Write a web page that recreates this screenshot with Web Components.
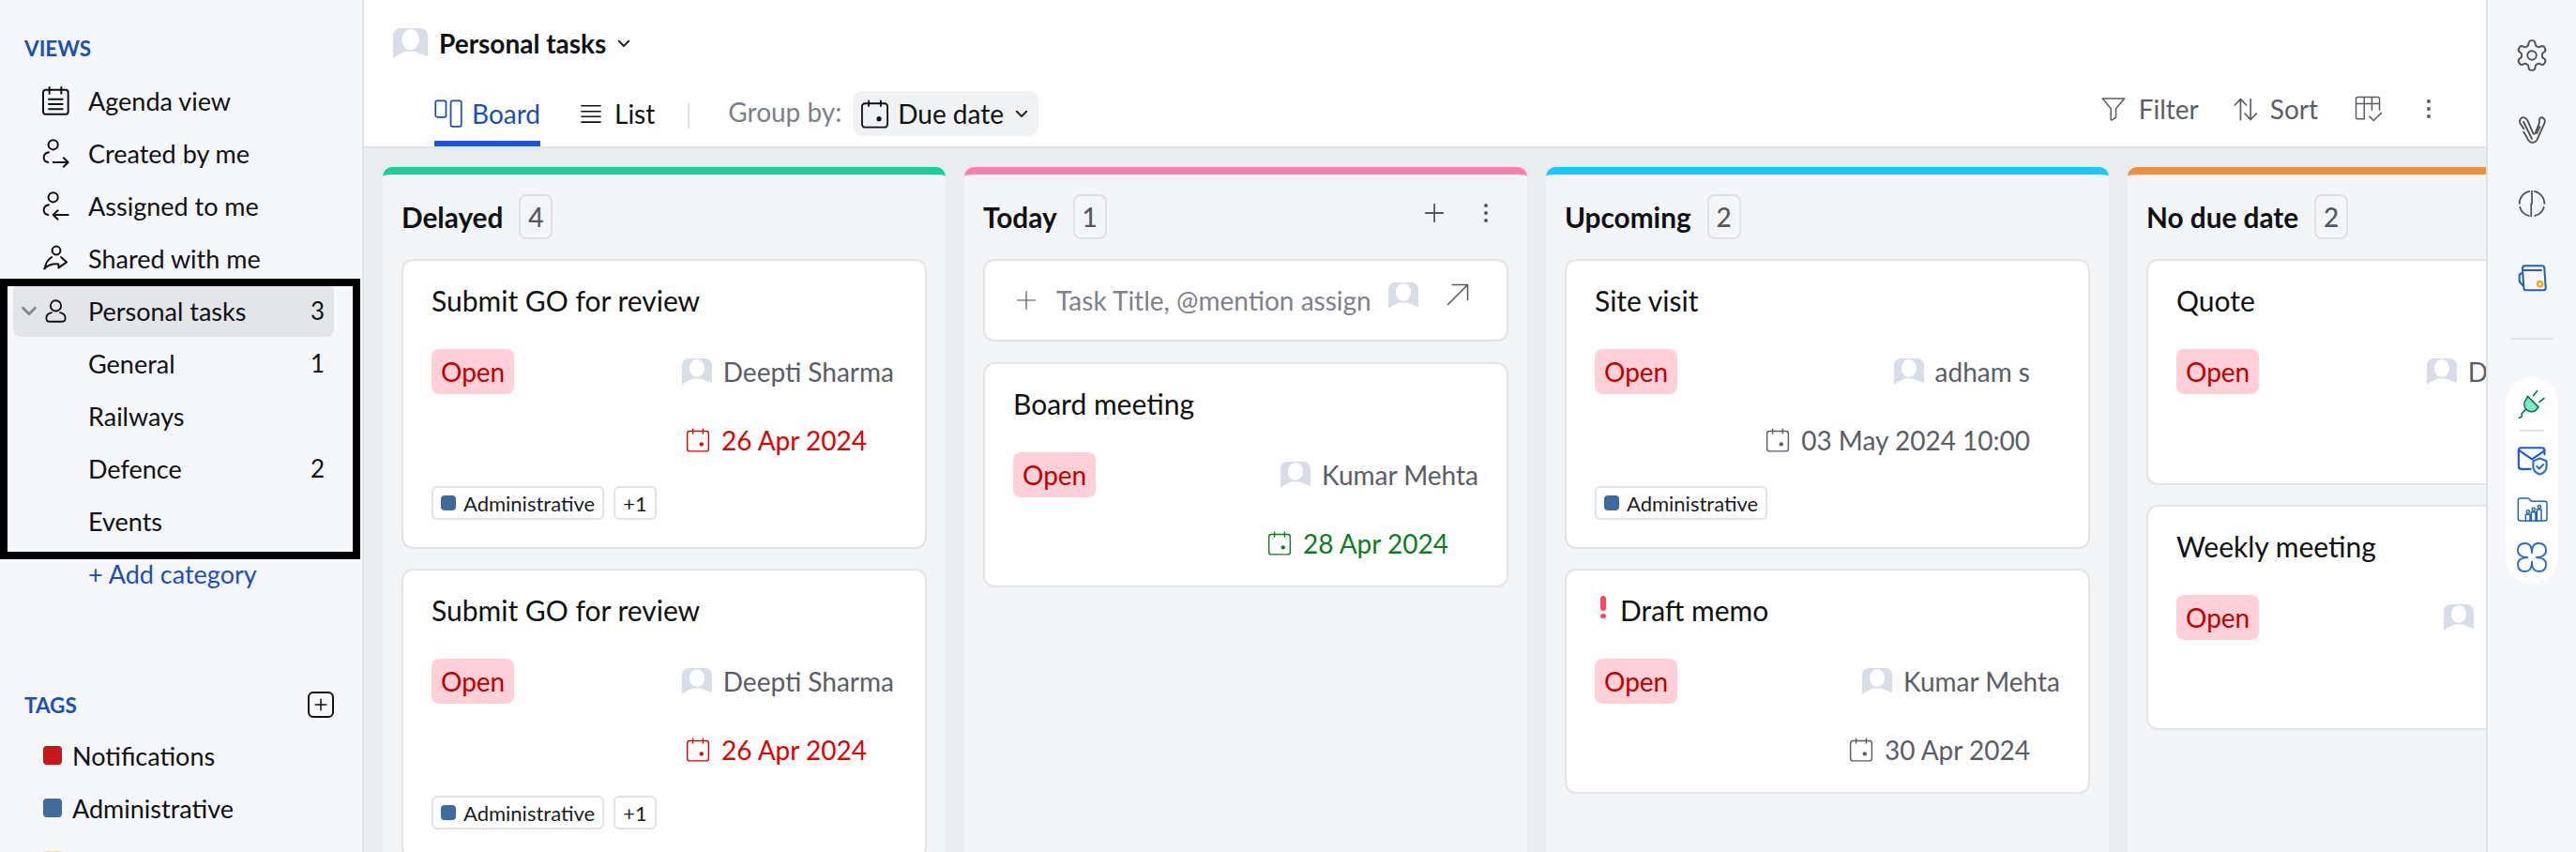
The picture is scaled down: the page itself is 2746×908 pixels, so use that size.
<!DOCTYPE html>
<html>
<head>
<meta charset="utf-8">
<title>Personal tasks</title>
<style>
  html, body { margin: 0; height: 100%; overflow: hidden; }
  body { font-family: "Lato", "Noto Sans", sans-serif; color: #0f1012; background: #fff; }
</style>
</head>
<body>
<task-app>
  <side-bar slot="left">
    <section-title>VIEWS</section-title>
    <nav-item icon="agenda">Agenda view</nav-item>
    <nav-item icon="created">Created by me</nav-item>
    <nav-item icon="assigned">Assigned to me</nav-item>
    <nav-item icon="shared">Shared with me</nav-item>
    <nav-item icon="person" active count="3">Personal tasks</nav-item>
    <nav-item count="1">General</nav-item>
    <nav-item>Railways</nav-item>
    <nav-item count="2">Defence</nav-item>
    <nav-item>Events</nav-item>
    <nav-item link>+ Add category</nav-item>
    <section-title add spaced>TAGS</section-title>
    <tag-row color="#c8161d">Notifications</tag-row>
    <tag-row color="#406a9b">Administrative</tag-row>
    <tag-row color="#f0dc6a"></tag-row>
  </side-bar>

  <view-header slot="top"></view-header>

  <board-column slot="board" label="Delayed" count="4" color="#17cf9d">
    <task-card label="Submit GO for review" assignee="Deepti Sharma" pad="3" date="26 Apr 2024" tone="#e00000">
      <tag-chip color="#406a9b">Administrative</tag-chip><tag-chip>+1</tag-chip>
    </task-card>
    <task-card label="Submit GO for review" assignee="Deepti Sharma" pad="3" date="26 Apr 2024" tone="#e00000">
      <tag-chip color="#406a9b">Administrative</tag-chip><tag-chip>+1</tag-chip>
    </task-card>
  </board-column>

  <board-column slot="board" label="Today" count="1" color="#ff7eae" actions>
    <quick-add></quick-add>
    <task-card label="Board meeting" assignee="Kumar Mehta" date="28 Apr 2024" tone="#0b7d1e"></task-card>
  </board-column>

  <board-column slot="board" label="Upcoming" count="2" color="#17c9ff">
    <task-card label="Site visit" assignee="adham s" pad="32" date="03 May 2024 10:00">
      <tag-chip color="#406a9b">Administrative</tag-chip>
    </task-card>
    <task-card label="Draft memo" priority assignee="Kumar Mehta" date="30 Apr 2024"></task-card>
  </board-column>

  <board-column slot="board" label="No due date" count="2" color="#ec8e3f">
    <task-card style="min-height:241px" label="Quote" assignee="Deepti Sharma" pad="3"></task-card>
    <task-card label="Weekly meeting" assignee="Kumar Mehta"></task-card>
  </board-column>

  <side-rail slot="right"></side-rail>
  <focus-frame slot="over"></focus-frame>
</task-app>

<script>
  // icon paths, all in a 24 box
  const ICONS = {
    agenda: `<path d="M8 1.5v5M17.5 1.5v5M8 3.5h9.500M8 3.5H5a2 2 0 0 0-2 2V21a2 2 0 0 0 2 2h16a2 2 0 0 0 2-2V5.5a2 2 0 0 0-2-2h-3.500M7.500 11h11M7.500 15h11M7.500 19h11"/>`,
    calendar: `<path d="M7 1v4.500M17 1v4.500M7 3.300h10M7 3.300H4a2.500 2.500 0 0 0-2.500 2.500v14.700A2.500 2.500 0 0 0 4 23h16a2.500 2.500 0 0 0 2.500-2.500V5.800A2.500 2.500 0 0 0 20 3.300h-3"/><circle cx="15.500" cy="16" r="2" fill="currentColor" stroke="none"/>`,
    created: `<circle cx="11" cy="5.500" r="3.800"/><path d="M7.500 11.500c-2.500.5-4 2.300-4 4.200 0 1.900 1.300 3.300 3.500 3.800M11 19.500h12M19.300 16l3.700 3.500-3.700 3.500"/>`,
    assigned: `<circle cx="11" cy="5.500" r="3.800"/><path d="M7.500 11.500c-2.500.5-4 2.300-4 4.200 0 1.900 1.300 3.300 3.500 3.800M11 19.500h12M14.700 16L11 19.500l3.700 3.500"/>`,
    shared: `<circle cx="13.500" cy="6" r="3.300"/><path d="M4.300 20.500c.5-4 2.500-7.500 5.500-9.200M17.300 11.300l4.500 4-6.500 4.500v-3c-4.500-.3-8.500.8-11.500 3.700"/>`,
    person: `<circle cx="12" cy="7" r="5"/><path d="M8 13.500c-3 .6-5 2.800-5 5.300 0 2 1.500 3.200 3.500 3.200h11c2 0 3.500-1.200 3.500-3.200 0-2.500-2-4.700-5-5.300"/>`,
    chevron: `<path d="M5 9l7 7 7-7"/>`,
    plus: `<path d="M12 2v20M2 12h20"/>`,
    dots: `<circle cx="12" cy="4" r="2" fill="currentColor" stroke="none"/><circle cx="12" cy="12" r="2" fill="currentColor" stroke="none"/><circle cx="12" cy="20" r="2" fill="currentColor" stroke="none"/>`,
    board: `<rect x="1" y="1" width="9" height="14" rx="1.500"/><rect x="14" y="1" width="9" height="22" rx="1.500"/>`,
    list: `<path d="M1 3h22M1 9.500h22M1 15.500h22M1 22h22"/>`,
    filter: `<path d="M2 2.500h20l-7.800 9.300V20l-3.700 2.200a.6.6 0 0 1-.9-.5V11.800z"/>`,
    sort: `<path d="M7.500 22V2.500M2 8l5.500-5.700L13 8M17 2.500V22M11.500 16l5.500 5.800 5.500-5.800"/>`,
    columns: `<path d="M9 20.500H3.500A1.500 1.500 0 0 1 2 19V3.500A1.500 1.500 0 0 1 3.500 2h17A1.500 1.500 0 0 1 22 3.500V13M2 7.500h20M9 2v18.500M15.500 2v11M13.500 18.500l3.500 3.500 6.500-6.500"/>`,
    arrow: `<path d="M3 21L21 3M7 3h14v14"/>`,
    gear: `<path d="M12.220 2h-.44a2 2 0 0 0-2 2v.18a2 2 0 0 1-1 1.730l-.43.25a2 2 0 0 1-2 0l-.15-.08a2 2 0 0 0-2.730.73l-.22.38a2 2 0 0 0 .73 2.730l.15.1a2 2 0 0 1 1 1.720v.51a2 2 0 0 1-1 1.740l-.15.09a2 2 0 0 0-.73 2.730l.22.38a2 2 0 0 0 2.730.73l.15-.08a2 2 0 0 1 2 0l.43.25a2 2 0 0 1 1 1.730V20a2 2 0 0 0 2 2h.44a2 2 0 0 0 2-2v-.18a2 2 0 0 1 1-1.730l.43-.25a2 2 0 0 1 2 0l.15.08a2 2 0 0 0 2.730-.73l.22-.39a2 2 0 0 0-.73-2.730l-.15-.08a2 2 0 0 1-1-1.740v-.5a2 2 0 0 1 1-1.740l.15-.09a2 2 0 0 0 .73-2.730l-.22-.38a2 2 0 0 0-2.730-.73l-.15.08a2 2 0 0 1-2 0l-.43-.25a2 2 0 0 1-1-1.730V4a2 2 0 0 0-2-2z"/><circle cx="12" cy="12" r="3"/>`,
    clip: `<path d="M5.500 11.500L2.600 7.200C1.300 4.800 3.400 1.800 6 2.500c1.300.3 2 1.200 2.600 2.500l4.200 9.800c.4 1 1.500 1 1.900 0l2-5 1.400-3.500C17 3.800 18.800 1.800 20.800 2.700c1.600.7 2 2.700 1.200 4.300l-6 13.300c-1.500 2.800-5.200 2.800-6.900.1L5.500 14"/><path d="M12 19.500L5.300 5.800M18.300 9.800L15.800 15"/>`,
    split: `<path d="M10 2.200A10 10 0 0 0 2 12M2.400 14.800A10 10 0 0 0 9.500 21.700M14 2.200A10 10 0 0 1 22 12M21.600 14.800A10 10 0 0 1 14.500 21.700M12 2v10M11.400 12v10"/>`
  };

  const COLOR_ICONS = {
    wallet: `<g fill="none" stroke="#1f62b0" stroke-width="1.500" stroke-linecap="round" stroke-linejoin="round"><path d="M4.500 6V4.500A2 2 0 0 1 6.500 2.500H20a2 2 0 0 1 2 2L23 20a2 2 0 0 1-2 2H7.500a2 2 0 0 1-2-2L4.500 6h15"/><path d="M4.500 8L2 9.500V15l3 3.500"/></g><circle cx="18.500" cy="17" r="2" fill="none" stroke="#f5a623" stroke-width="1.700"/>`,
    plug: `<g stroke="#0a6b52" stroke-width="1.100" stroke-linecap="round" stroke-linejoin="round"><path d="M8.800 6.500l8.200 8.200-2 2.300c-2.300 1.800-5.300 1.500-7.200-.5-1.900-2-2.100-5-.3-7.300z" fill="#7ce8c8"/><path d="M13 6.200L16 2.500M17.500 11l3.700-3M7.500 16.500l-3 2.800c-.8 1 .5 1.800-.3 2.700-.6.500-1.200.7-1.900.7" fill="none"/></g>`,
    mail: `<g fill="none" stroke-width="1.500" stroke-linecap="round" stroke-linejoin="round"><path d="M21.500 8V5a2 2 0 0 0-2-2H4a2 2 0 0 0-2 2v12a2 2 0 0 0 2 2h7" stroke="#1a56db"/><path d="M2.500 5l9.500 6.500 9-6" stroke="#1a56db"/><path d="M18 11l5 1.800v4.500c0 2.800-2.200 4.700-5 5.700-2.800-1-5-2.900-5-5.700v-4.500z" stroke="#2a6cc0"/><path d="M15.800 17l1.700 1.700 3-3" stroke="#2a6cc0"/></g>`,
    folder: `<g fill="none" stroke="#1f62b0" stroke-width="1.100" stroke-linecap="round" stroke-linejoin="round"><path d="M6 21H2.500A1.500 1.500 0 0 1 1 19.500V4.500A1.500 1.500 0 0 1 2.500 3H9l3 2.500h10.500A1.500 1.500 0 0 1 24 7v12.500a1.500 1.500 0 0 1-1.500 1.500H6"/><path d="M7 21v-5h3.500v5M11.500 21v-7h3.500v7M16 21v-9h3.500v9"/><circle cx="8.800" cy="13.800" r="1.200"/><circle cx="13.300" cy="11.800" r="1.200"/><circle cx="18" cy="9.800" r="1.200"/></g>`,
    clover: `<path d="M12 9C12 5 13 2.500 16.500 2.500 20 2.500 21.500 4.500 21.500 7.500 21.500 10 19 12 15 12 19 12 21.500 14 21.500 16.500 21.500 19.500 20 21.500 16.500 21.500 13 21.500 12 19 12 15 12 19 11 21.500 7.500 21.500 4 21.500 2.500 19.500 2.500 16.500 2.500 14 5 12 9 12 5 12 2.500 10 2.500 7.500 2.500 4.500 4 2.500 7.500 2.500 11 2.500 12 5 12 9Z" fill="none" stroke="#2a6cc0" stroke-width="1.200" stroke-linejoin="round"/>`
  };

  class UiIcon extends HTMLElement {
    connectedCallback() {
      const name = this.getAttribute("name");
      const size = this.getAttribute("size") || 24;
      const sw = this.getAttribute("stroke") || 1.5;
      const root = this.shadowRoot || this.attachShadow({ mode: "open" });
      const body = COLOR_ICONS[name]
        ? COLOR_ICONS[name]
        : `<g fill="none" stroke="currentColor" stroke-width="${sw}" stroke-linecap="round" stroke-linejoin="round">${ICONS[name] || ""}</g>`;
      root.innerHTML = `
        <style>
          :host { display: inline-flex; flex: none; }
          svg { display: block; overflow: visible; }
        </style>
        <svg width="${size}" height="${size}" viewBox="0 0 24 24">${body}</svg>`;
    }
  }
  customElements.define("ui-icon", UiIcon);

  class UserAvatar extends HTMLElement {
    connectedCallback() {
      const w = this.getAttribute("w") || 32;
      const root = this.shadowRoot || this.attachShadow({ mode: "open" });
      root.innerHTML = `
        <style>
          :host { display: inline-flex; flex: none; }
          svg { display: block; }
        </style>
        <svg width="${w}" height="${w * 0.875}" viewBox="0 0 32 28">
          <path d="M0 7a7 7 0 0 1 7-7h18a7 7 0 0 1 7 7v19l-5-1.500h-22L0 28z" fill="#d8dde8"/>
          <ellipse cx="16" cy="10.500" rx="8" ry="9.500" fill="#fff"/>
          <path d="M2 28c.5-3 5-4.500 10-6.500h8c5 2 9.500 3.500 10 5.500v1z" fill="#fff"/>
        </svg>`;
    }
  }
  customElements.define("user-avatar", UserAvatar);

  class TaskApp extends HTMLElement {
    constructor() {
      super();
      this.attachShadow({ mode: "open" });
      this.shadowRoot.innerHTML = `
        <style>
          :host { display: flex; position: relative; width: 2746px; height: 908px; overflow: hidden; background: #fff; }
          .main { flex: 1; min-width: 0; display: flex; flex-direction: column; overflow: hidden; }
          .board { flex: 1; min-height: 0; display: flex; gap: 20px; padding: 20px 0 0 20px; background: #ebecee; overflow: hidden; }
        </style>
        <slot name="left"></slot>
        <div class="main">
          <slot name="top"></slot>
          <div class="board"><slot name="board"></slot></div>
        </div>
        <slot name="right"></slot>
        <slot name="over"></slot>`;
    }
  }
  customElements.define("task-app", TaskApp);

  class SideBar extends HTMLElement {
    constructor() {
      super();
      this.attachShadow({ mode: "open" });
      this.shadowRoot.innerHTML = `
        <style>
          :host { display: block; flex: none; box-sizing: border-box; width: 388px; height: 908px; padding-top: 37px;
                  background: #f6f7fb; border-right: 2px solid #e0e2e6; overflow: hidden; }
        </style>
        <slot></slot>`;
    }
  }
  customElements.define("side-bar", SideBar);

  class SectionTitle extends HTMLElement {
    constructor() {
      super();
      this.attachShadow({ mode: "open" });
      this.shadowRoot.innerHTML = `
        <style>
          :host { display: flex; align-items: center; justify-content: space-between; box-sizing: border-box; width: 356px; height: 28px;
                  margin: 0 0 14px 26px; color: #1a4fb5; font-size: 22.5px; font-weight: 700; }
          :host([spaced]) { margin-top: 98px; margin-bottom: 12px; }
          .add { display: none; box-sizing: border-box; width: 28px; height: 28px; margin-right: 26px; border: 2px solid #111; border-radius: 6px;
                 align-items: center; justify-content: center; color: #111; }
          :host([add]) .add { display: flex; }
        </style>
        <span><slot></slot></span>
        <span class="add"><ui-icon name="plus" size="14" stroke="2.6"></ui-icon></span>`;
    }
  }
  customElements.define("section-title", SectionTitle);

  class NavItem extends HTMLElement {
    connectedCallback() {
      const icon = this.getAttribute("icon");
      const count = this.getAttribute("count") || "";
      const active = this.hasAttribute("active");
      const root = this.shadowRoot || this.attachShadow({ mode: "open" });
      root.innerHTML = `
        <style>
          :host { display: flex; align-items: center; box-sizing: border-box; height: 56px; width: 342px; margin-left: 14px;
                  font-size: 27px; border-radius: 8px; color: #0f1012; }
          :host([active]) { background: #e4e5e9; }
          :host([link]) { color: #1a4fb5; }
          .chev { width: 32px; flex: none; display: flex; padding-left: 6px; box-sizing: border-box; color: #85878d; }
          .ico { width: 48px; flex: none; display: flex; }
          .lead { width: 52px; margin-left: 28px; }
          .none { width: 80px; flex: none; }
          .label { flex: 1; white-space: nowrap; }
          .count { padding-right: 10px; font-size: 26px; }
        </style>
        ${active
          ? `<span class="chev"><ui-icon name="chevron" size="22" stroke="3"></ui-icon></span>
             <span class="ico"><ui-icon name="${icon}" size="27" stroke="1.6"></ui-icon></span>`
          : icon
            ? `<span class="ico lead"><ui-icon name="${icon}" size="32"></ui-icon></span>`
            : `<span class="none"></span>`}
        <span class="label"><slot></slot></span>
        <span class="count">${count}</span>`;
    }
  }
  customElements.define("nav-item", NavItem);

  class TagRow extends HTMLElement {
    connectedCallback() {
      const root = this.shadowRoot || this.attachShadow({ mode: "open" });
      root.innerHTML = `
        <style>
          :host { display: flex; align-items: center; height: 56px; padding-left: 46px; font-size: 27px; }
          i { width: 20px; height: 20px; border-radius: 4px; margin-right: 11px; flex: none; background: ${this.getAttribute("color")}; }
        </style>
        <i></i><slot></slot>`;
    }
  }
  customElements.define("tag-row", TagRow);

  class ViewHeader extends HTMLElement {
    constructor() {
      super();
      this.attachShadow({ mode: "open" });
      this.shadowRoot.innerHTML = `
        <style>
          :host { display: block; flex: none; box-sizing: border-box; height: 158px; border-bottom: 2px solid #e0e2e5; background: #fff; font-size: 28px; }
          .title { display: flex; align-items: center; height: 48px; padding: 22px 0 0 31px; font-weight: 700; }
          .title span { margin: 0 10px 0 12px; }
          .title ui-icon, .pill .chev { color: #222; }
          .row { display: flex; align-items: flex-start; height: 64px; margin-top: 22px; padding-left: 75px; }
          .tab { display: flex; align-items: center; gap: 10px; box-sizing: border-box; height: 64px; padding-bottom: 6px; }
          .tab.on { color: #1a4fb5; border-bottom: 6px solid #1a56db; padding-bottom: 0; }
          .tab.list { margin-left: 43px; gap: 14px; }
          .sep { width: 2px; height: 27px; margin: 18px 41px 0 35px; background: #dfe0e3; }
          .group { margin-top: 13px; margin-right: 12px; line-height: 28px; color: #7c7f87; }
          .pill { display: flex; align-items: center; gap: 9px; height: 48px; margin-top: 5px; padding: 0 9px 0 8px; border-radius: 10px; background: #f1f2f4; }
          .pill .chev { margin-left: 1px; }
          .tools { margin-left: auto; display: flex; align-items: center; height: 48px; padding-right: 49px; color: #5a5d66; }
          .tool { display: flex; align-items: center; gap: 13px; }
        </style>
        <div class="title">
          <user-avatar w="37"></user-avatar><span>Personal tasks</span>
          <ui-icon name="chevron" size="18" stroke="2.6"></ui-icon>
        </div>
        <div class="row">
          <div class="tab on"><ui-icon name="board" size="30" stroke="1.4"></ui-icon>Board</div>
          <div class="tab list"><ui-icon name="list" size="22" stroke="1.8"></ui-icon>List</div>
          <div class="sep"></div>
          <div class="group">Group by:</div>
          <div class="pill"><ui-icon name="calendar" size="31" stroke="1.4"></ui-icon>Due date<ui-icon class="chev" name="chevron" size="18" stroke="2.6"></ui-icon></div>
          <div class="tools">
            <div class="tool"><ui-icon name="filter" size="28" stroke="1.3"></ui-icon>Filter</div>
            <div class="tool" style="margin-left:36px"><ui-icon name="sort" size="27" stroke="1.5"></ui-icon>Sort</div>
            <ui-icon style="margin-left:38px" name="columns" size="30" stroke="1.2"></ui-icon>
            <ui-icon style="margin-left:38px" name="dots" size="24"></ui-icon>
          </div>
        </div>`;
    }
  }
  customElements.define("view-header", ViewHeader);

  class BoardColumn extends HTMLElement {
    connectedCallback() {
      const root = this.shadowRoot || this.attachShadow({ mode: "open" });
      root.innerHTML = `
        <style>
          :host { display: block; flex: 0 0 600px; box-sizing: border-box; background: #f4f5f7; border-top: 8px solid ${this.getAttribute("color")};
                  border-radius: 10px 10px 0 0; padding: 0 20px; }
          .head { display: flex; align-items: center; height: 90px; font-size: 29.75px; font-weight: 700; }
          .num { display: flex; align-items: center; justify-content: center; box-sizing: border-box; min-width: 36px; height: 48px; margin-left: 17px;
                 border: 2px solid #dfe0e3; border-radius: 8px; color: #56585f; font-weight: 500; font-size: 28px; }
          .acts { display: none; margin-left: auto; align-items: center; gap: 32px; color: #55575e; padding-right: 12px; margin-bottom: 8px; }
          :host([actions]) .acts { display: flex; }
          .list { display: flex; flex-direction: column; gap: 21px; }
        </style>
        <div class="head">
          <span>${this.getAttribute("label")}</span>
          <span class="num">${this.getAttribute("count")}</span>
          <span class="acts"><ui-icon name="plus" size="22" stroke="2"></ui-icon><ui-icon name="dots" size="24"></ui-icon></span>
        </div>
        <div class="list"><slot></slot></div>`;
    }
  }
  customElements.define("board-column", BoardColumn);

  class TaskCard extends HTMLElement {
    connectedCallback() {
      const date = this.getAttribute("date");
      const tone = this.getAttribute("tone") || "#5a5d66";
      const pad = this.getAttribute("pad") || 0;
      const root = this.shadowRoot || this.attachShadow({ mode: "open" });
      root.innerHTML = `
        <style>
          :host { display: block; box-sizing: border-box; min-height: 240px; padding: 18px 30px 21px; background: #fff;
                  border: 2px solid #e3e4e6; border-radius: 12px; font-size: 28px; color: #0f1012; }
          .title { display: flex; align-items: center; height: 48px; margin-bottom: 28px; font-size: 30px; white-space: nowrap; }
          .bang { width: 8px; height: 24px; margin: -6px 14px 0 5px; flex: none; }
          .bang::before { content: ""; display: block; width: 6px; height: 16px; margin: 0 auto 3px; border-radius: 3px; background: #ff4560; }
          .bang::after { content: ""; display: block; width: 6px; height: 5px; margin: 0 auto; border-radius: 3px; background: #ff4560; }
          .row { display: flex; align-items: center; height: 48px; }
          .open { display: flex; align-items: center; height: 48px; padding: 0 10px; border-radius: 8px; background: #ffd0d7; color: #bd0000; }
          .who { margin-left: auto; display: flex; align-items: center; gap: 12px; padding-right: ${pad}px; color: #5a5d66; white-space: nowrap; }
          .due { display: flex; justify-content: flex-end; align-items: center; gap: 12px; height: 48px; margin-top: 25px; padding-right: 32px; color: ${tone}; white-space: nowrap; }
          .spacer { height: 48px; margin-top: 25px; }
          .tags { display: flex; gap: 10px; }
          .tags.has { margin-top: 25px; margin-bottom: 8px; }
        </style>
        <div class="title">${this.hasAttribute("priority") ? `<span class="bang"></span>` : ""}${this.getAttribute("label")}</div>
        <div class="row">
          <div class="open">Open</div>
          <div class="who"><user-avatar></user-avatar>${this.getAttribute("assignee")}</div>
        </div>
        ${date ? `<div class="due"><ui-icon name="calendar" size="26" stroke="1.3"></ui-icon>${date}</div>` : `<div class="spacer"></div>`}
        <div class="tags ${this.children.length ? "has" : ""}"><slot></slot></div>`;
    }
  }
  customElements.define("task-card", TaskCard);

  class TagChip extends HTMLElement {
    connectedCallback() {
      const color = this.getAttribute("color");
      const root = this.shadowRoot || this.attachShadow({ mode: "open" });
      root.innerHTML = `
        <style>
          :host { display: inline-flex; align-items: center; gap: 8px; box-sizing: border-box; height: 36px; padding: 0 8px; border: 2px solid #e2e3e5;
                  border-radius: 6px; font-size: 22px; color: #1a1b1e; background: #fff; white-space: nowrap; }
          i { width: 16px; height: 16px; border-radius: 4px; flex: none; background: ${color}; }
        </style>
        ${color ? "<i></i>" : ""}<slot></slot>`;
    }
  }
  customElements.define("tag-chip", TagChip);

  class QuickAdd extends HTMLElement {
    constructor() {
      super();
      this.attachShadow({ mode: "open" });
      this.shadowRoot.innerHTML = `
        <style>
          :host { display: flex; align-items: center; box-sizing: border-box; height: 88px; padding: 0 0 0 33px; margin-bottom: 1px; background: #fff;
                  border: 2px solid #e3e4e6; border-radius: 12px; font-size: 28px; color: #7f818a; white-space: nowrap; }
          .text { margin: 0 18px 0 21px; }
          .ava { display: flex; margin-top: -10px; }
          .go { display: flex; margin: -12px 0 0 28px; color: #55575e; }
        </style>
        <ui-icon name="plus" size="22" stroke="1.8"></ui-icon>
        <span class="text">Task Title, @mention assign</span>
        <span class="ava"><user-avatar></user-avatar></span>
        <span class="go"><ui-icon name="arrow" size="28" stroke="1.3"></ui-icon></span>`;
    }
  }
  customElements.define("quick-add", QuickAdd);

  class SideRail extends HTMLElement {
    constructor() {
      super();
      this.attachShadow({ mode: "open" });
      this.shadowRoot.innerHTML = `
        <style>
          :host { display: flex; flex-direction: column; align-items: center; flex: none; box-sizing: border-box; width: 96px; height: 908px;
                  padding-top: 19px; background: #f6f7fb; border-left: 2px solid #dfe1e6; color: #4e5056; }
          .slot { display: flex; align-items: center; justify-content: center; height: 79px; }
          .sep { width: 46px; height: 2px; margin-top: 25px; background: #e1e3e8; flex: none; }
          .pill { display: flex; flex-direction: column; align-items: center; box-sizing: border-box; width: 56px; height: 220px; margin-top: 40px; padding-top: 11px;
                  border-radius: 28px; background: #fff; }
          .line { width: 26px; height: 2px; margin: 11px 0 13px; background: #dfe1e6; }
          .gap { margin-top: 20px; }
          .gap2 { margin-top: 16px; }
        </style>
        <div class="slot"><ui-icon name="gear" size="38" stroke="1.2"></ui-icon></div>
        <div class="slot"><ui-icon name="clip" size="32" stroke="1.4"></ui-icon></div>
        <div class="slot"><ui-icon name="split" size="32" stroke="1.3"></ui-icon></div>
        <div class="slot"><ui-icon name="wallet" size="32"></ui-icon></div>
        <div class="sep"></div>
        <div class="pill">
          <ui-icon name="plug" size="34"></ui-icon>
          <div class="line"></div>
          <ui-icon name="mail" size="34"></ui-icon>
          <ui-icon class="gap" name="folder" size="32"></ui-icon>
          <ui-icon class="gap2" name="clover" size="38"></ui-icon>
        </div>`;
    }
  }
  customElements.define("side-rail", SideRail);

  // the black outline drawn over the sidebar in the screenshot
  class FocusFrame extends HTMLElement {
    constructor() {
      super();
      this.attachShadow({ mode: "open" });
      this.shadowRoot.innerHTML = `
        <style>
          :host { position: absolute; left: 0; top: 297px; box-sizing: border-box; width: 384px; height: 299px; border: 8px solid #000; pointer-events: none; }
        </style>`;
    }
  }
  customElements.define("focus-frame", FocusFrame);
</script>
</body>
</html>
